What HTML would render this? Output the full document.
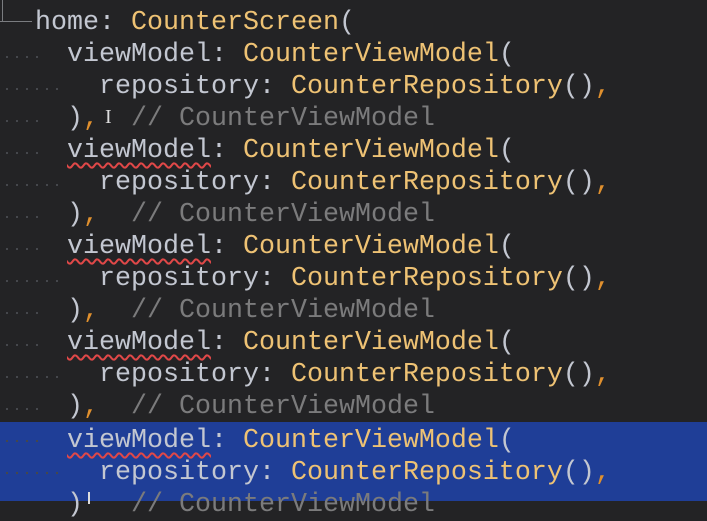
<!DOCTYPE html>
<html><head><style>
html,body{margin:0;padding:0;background:#232325;width:707px;height:501px;overflow:hidden}
.l{position:absolute;left:0;height:32px;line-height:32px;white-space:pre;font-family:"Liberation Mono",monospace;font-size:26.67px;color:#c3c7d1;width:707px}
.y{color:#eec274}.c{color:#7b7b7c}.o{color:#e0902e}
.w{text-decoration:underline wavy #e04848;text-decoration-thickness:1.5px;text-underline-offset:5px}
.d{position:absolute;width:2px;height:2px;background:#45474c}
.sel{background:#1f3e97}
</style></head><body>
<div style="position:absolute;left:0;top:21px;width:32px;height:1px;background:#7a7c80"></div>
<div style="position:absolute;left:2px;top:0;width:1px;height:21px;background:#7a7c80"></div>
<div class="l" style="top:-25px;left:35px"><span class="c">/</span></div>
<div class="l" style="top:7px;left:35px">home: <span class="y">CounterScreen</span>(</div>

<div class="l" style="top:39px;left:67px">viewModel: <span class="y">CounterViewModel</span>(</div>
<div class="l" style="top:71px;left:99px">repository: <span class="y">CounterRepository</span>()<span class="o">,</span></div>
<div class="l" style="top:103px;left:67px">)<span class="o">,</span>  <span class="c">// CounterViewModel</span></div>
<div style="position:absolute;left:105px;top:106px;color:#ddd;font:20px 'Liberation Serif',serif">I</div>

<div class="l" style="top:135px;left:67px"><span class="w">viewModel</span>: <span class="y">CounterViewModel</span>(</div>
<div class="l" style="top:167px;left:99px">repository: <span class="y">CounterRepository</span>()<span class="o">,</span></div>
<div class="l" style="top:199px;left:67px">)<span class="o">,</span>  <span class="c">// CounterViewModel</span></div>

<div class="l" style="top:231px;left:67px"><span class="w">viewModel</span>: <span class="y">CounterViewModel</span>(</div>
<div class="l" style="top:263px;left:99px">repository: <span class="y">CounterRepository</span>()<span class="o">,</span></div>
<div class="l" style="top:295px;left:67px">)<span class="o">,</span>  <span class="c">// CounterViewModel</span></div>

<div class="l" style="top:327px;left:67px"><span class="w">viewModel</span>: <span class="y">CounterViewModel</span>(</div>
<div class="l" style="top:359px;left:99px">repository: <span class="y">CounterRepository</span>()<span class="o">,</span></div>
<div class="l" style="top:391px;left:67px">)<span class="o">,</span>  <span class="c">// CounterViewModel</span></div>

<div class="sel" style="position:absolute;left:0;top:422px;width:707px;height:79px"></div>
<div class="l" style="top:425px;left:67px"><span class="w">viewModel</span>: <span class="y">CounterViewModel</span>(</div>
<div class="l" style="top:457px;left:99px">repository: <span class="y">CounterRepository</span>()<span class="o">,</span></div>
<div class="l" style="top:489px;left:67px">)   <span class="c">// CounterViewModel</span></div>
<div style="position:absolute;left:88px;top:492px;width:2px;height:12px;background:#ddd"></div>

<div id="dots"></div>
<script>
var h='';var rows=[[55,4],[87,6],[119,4],[151,4],[183,6],[215,4],[247,4],[279,6],[311,4],[343,4],[375,6],[407,4],[439,4],[471,6]];
rows.forEach(function(r){for(var i=0;i<r[1];i++){h+='<div class="d" style="left:'+(6+i*10)+'px;top:'+(r[0]+1)+'px"></div>';}});
document.getElementById('dots').innerHTML=h;
</script>
</body></html>
